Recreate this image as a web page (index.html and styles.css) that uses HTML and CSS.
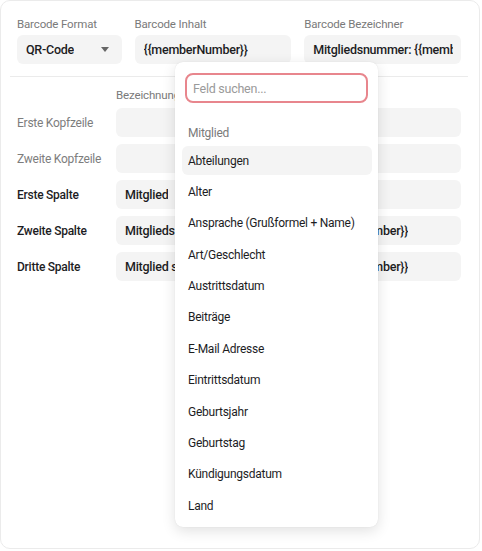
FILE: index.html
```html
<!DOCTYPE html>
<html lang="de">
<head>
<meta charset="utf-8">
<link rel="stylesheet" href="styles.css">
</head>
<body>
<div class="card">
  <div class="top">
    <div class="field">
      <div class="label">Barcode Format</div>
      <div class="input select"><span class="val">QR-Code</span><span class="caret"></span></div>
    </div>
    <div class="field">
      <div class="label">Barcode Inhalt</div>
      <div class="input"><span class="val">{{memberNumber}}</span></div>
    </div>
    <div class="field">
      <div class="label">Barcode Bezeichner</div>
      <div class="input"><span class="val">Mitgliedsnummer: {{memberNumber}}</span></div>
    </div>
  </div>
  <div class="divider"></div>
  <div class="grid">
    <div></div>
    <div class="label">Bezeichnung</div>
    <div class="label">Inhalt</div>

    <div class="rowlabel muted">Erste Kopfzeile</div>
    <div class="input"></div>
    <div class="input"></div>

    <div class="rowlabel muted">Zweite Kopfzeile</div>
    <div class="input"></div>
    <div class="input"></div>

    <div class="rowlabel">Erste Spalte</div>
    <div class="input"><span class="val">Mitglied</span></div>
    <div class="input"></div>

    <div class="rowlabel">Zweite Spalte</div>
    <div class="input"><span class="val">Mitgliedsnummer</span></div>
    <div class="input"><span class="val">{{memberNumber}}</span></div>

    <div class="rowlabel">Dritte Spalte</div>
    <div class="input"><span class="val">Mitglied seit</span></div>
    <div class="input"><span class="val">{{memberNumber}}</span></div>
  </div>

  <div class="dropdown">
    <div class="search">Feld suchen...</div>
    <div class="group">Mitglied</div>
    <ul class="items">
      <li class="active">Abteilungen</li>
      <li>Alter</li>
      <li>Ansprache (Grußformel + Name)</li>
      <li>Art/Geschlecht</li>
      <li>Austrittsdatum</li>
      <li>Beiträge</li>
      <li>E-Mail Adresse</li>
      <li>Eintrittsdatum</li>
      <li>Geburtsjahr</li>
      <li>Geburtstag</li>
      <li>Kündigungsdatum</li>
      <li>Land</li>
    </ul>
  </div>
</div>
</body>
</html>
```
FILE: styles.css
```css
* { box-sizing: border-box; }
html, body { margin: 0; padding: 0; background: #fff; }
body {
  font-family: Roboto, "Liberation Sans", sans-serif;
  font-size: 12px;
  letter-spacing: -0.25px;
  color: #1d1d1f;
  width: 482px;
  height: 551px;
  overflow: hidden;
}
.card {
  position: relative;
  width: 480px;
  height: 549px;
  border: 1px solid #ebebeb;
  border-radius: 10px;
  padding: 15px 18px 0 16px;
}
.top {
  display: grid;
  grid-template-columns: minmax(0, 2fr) minmax(0, 3fr) minmax(0, 3fr);
  column-gap: 13px;
}
.label {
  font-size: 11.5px;
  letter-spacing: -0.15px;
  line-height: 16px;
  color: #7a7a7a;
  white-space: nowrap;
}
.field .label { margin-bottom: 3px; }
.input {
  height: 29px;
  background: #f4f4f4;
  border-radius: 6px;
  padding: 0 8px 0 9px;
  display: flex;
  align-items: center;
  font-weight: 500;
  font-size: 12.5px;
  white-space: nowrap;
  min-width: 0;
  color: #1d1d1f;
}
.val { overflow: hidden; min-width: 0; }
.select { justify-content: space-between; padding-right: 13px; }
.caret {
  flex: none;
  width: 0; height: 0;
  border-left: 4.5px solid transparent;
  border-right: 4.5px solid transparent;
  border-top: 5px solid #666;
}
.divider {
  height: 1px;
  background: #ebebeb;
  margin: 12px -7px 10px -7px;
}
.grid {
  display: grid;
  grid-template-columns: 86px minmax(0, 1fr) minmax(0, 1fr);
  column-gap: 13px;
  row-gap: 7px;
  align-items: center;
}
.grid > .label { margin-bottom: -2px; }
.rowlabel { font-weight: 500; font-size: 12px; white-space: nowrap; }
.rowlabel.muted { font-weight: 400; color: #7d7d7d; }
.dropdown {
  position: absolute;
  left: 174px;
  top: 61px;
  width: 203px;
  height: 465px;
  background: #fff;
  border-radius: 8px;
  box-shadow: 0 4px 14px rgba(0,0,0,0.12), 0 0 1px rgba(0,0,0,0.12);
  padding: 11px 6px 0 7px;
  overflow: hidden;
}
.search {
  margin: 0 4px 0 3px;
  height: 30px;
  border: 2px solid #e8868d;
  border-radius: 8px;
  padding: 0 6px;
  display: flex;
  align-items: center;
  color: #9a9a9a;
  font-size: 12.5px;
}
.group {
  margin-top: 22px;
  padding-left: 6px;
  font-size: 12px;
  line-height: 16px;
  color: #7a7a7a;
  margin-bottom: 5px;
}
.items { list-style: none; margin: 0; padding: 0; }
.items li {
  height: 29.36px;
  margin-bottom: 2px;
  display: flex;
  align-items: center;
  padding-left: 6px;
  border-radius: 6px;
  white-space: nowrap;
  font-size: 12px;
}
.items li.active { background: #f4f4f4; }
```
